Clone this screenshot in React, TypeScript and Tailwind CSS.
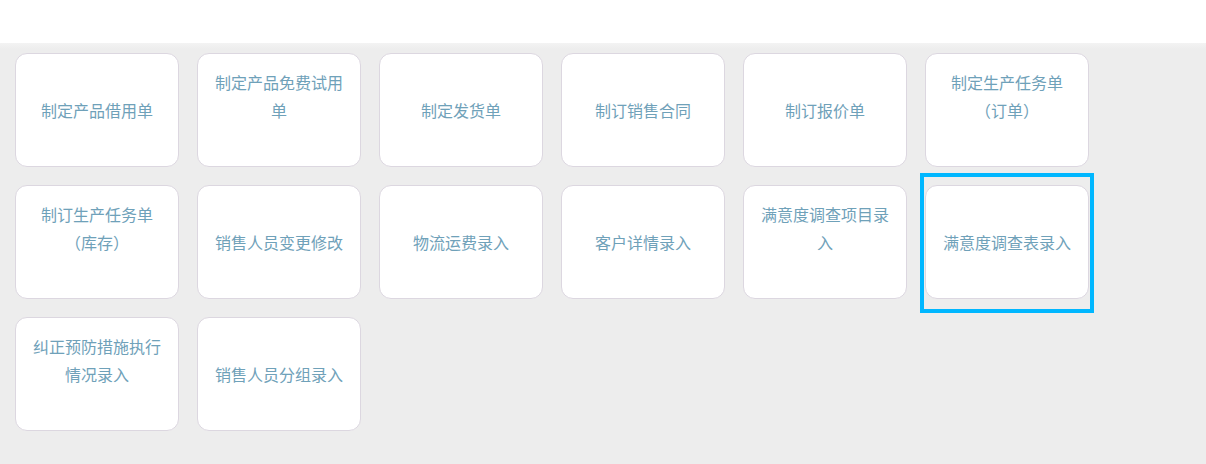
import React from "react";

const rows: string[][] = [
  ["制定产品借用单", "制定产品免费试用单", "制定发货单", "制订销售合同", "制订报价单", "制定生产任务单\n（订单）"],
  ["制订生产任务单\n（库存）", "销售人员变更修改", "物流运费录入", "客户详情录入", "满意度调查项目录入", "满意度调查表录入"],
  ["纠正预防措施执行情况录入", "销售人员分组录入"],
];

export default function App() {
  return (
    <div
      className="w-[1206px] h-[464px] bg-white flex flex-col overflow-hidden"
      style={{ fontFamily: '"Noto Sans CJK SC", "Noto Sans", sans-serif' }}
    >
      <div className="h-[43px] bg-white shrink-0" />
      <div className="relative flex-1 bg-[#ededed] pt-[10px] pl-[15px] bg-gradient-to-b from-[#f3f3f3] to-[#ededed] [background-size:100%_6px] [background-repeat:no-repeat]">
        <div className="flex flex-col gap-[18px]">
          {rows.map((row, i) => (
            <div key={i} className="flex gap-[18px]">
              {row.map((t) => (
                <div
                  key={t}
                  className="w-[164px] h-[114px] bg-white border border-[#dcd7e0] rounded-[12px] flex flex-col justify-end items-center pb-[42px] px-[10px]"
                >
                  <div className="text-[16px] leading-[28px] text-[#6fa1b9] text-center break-all whitespace-pre-line">
                    {t}
                  </div>
                </div>
              ))}
            </div>
          ))}
        </div>
        <div className="absolute left-[920px] top-[130px] w-[174px] h-[140px] border-[4px] border-[#00b7ff] pointer-events-none" />
      </div>
    </div>
  );
}
